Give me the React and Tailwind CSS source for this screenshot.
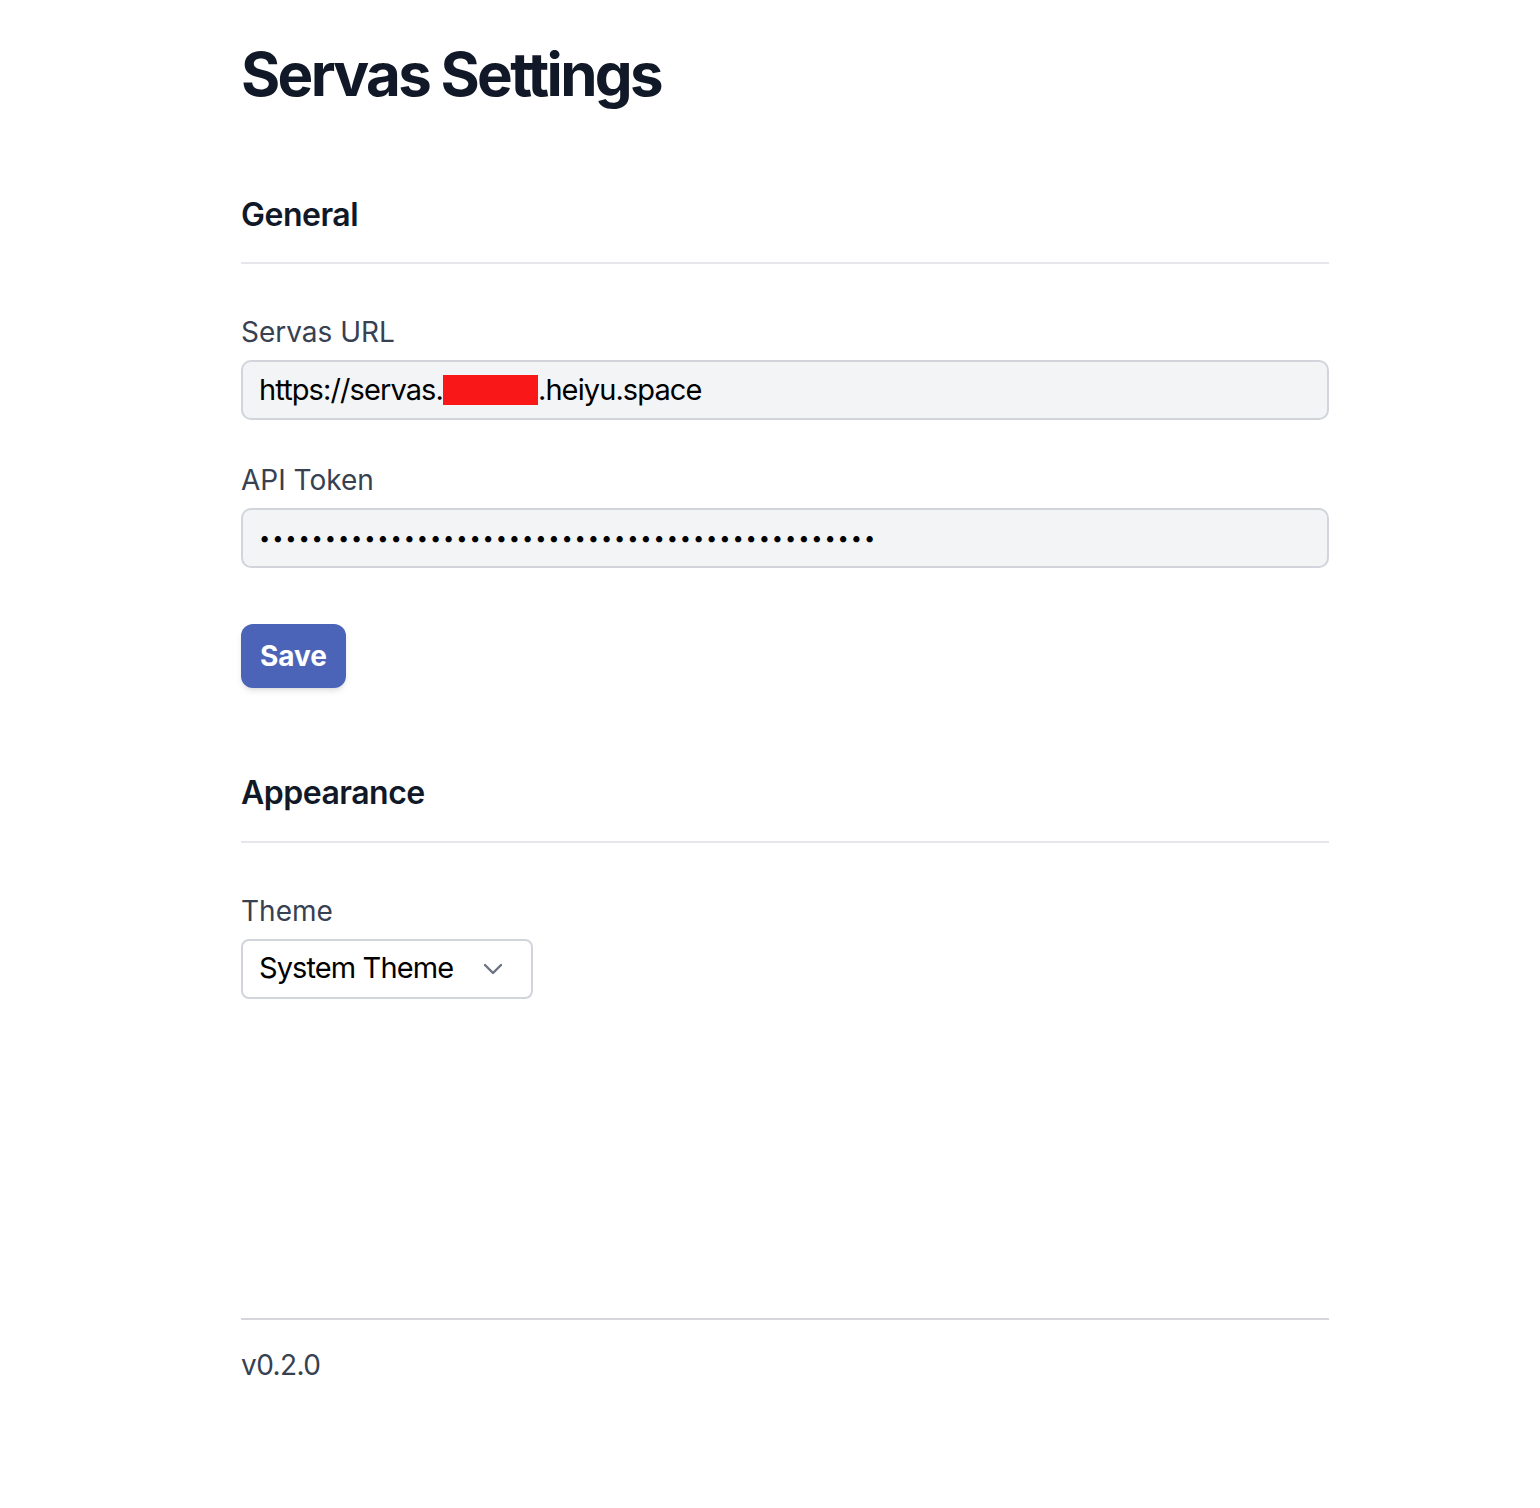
const Label = ({ children }) => (
  <div className="text-[28px] leading-[28px] text-[#374151]">{children}</div>
);

const App = () => {
  return (
    <div className="min-h-screen bg-white font-['Inter',sans-serif]">
      <div className="ml-[241px] w-[1088px] pt-[44px] pb-[128px] flex flex-col">
        <h1 className="text-[60px] leading-[60px] font-bold tracking-[-2.7px] text-[#111827]">
          Servas Settings
        </h1>

        {/* General */}
        <div className="mt-[94px] pb-[30px] border-b-2 border-[#e5e7eb]">
          <h2 className="text-[32px] leading-[34px] font-semibold tracking-[-0.5px] text-[#111827]">General</h2>
        </div>

        <div className="mt-[54px]">
          <Label>Servas URL</Label>
          <div className="mt-[14px] h-[60px] w-full flex items-center whitespace-nowrap px-[16px] bg-[#f3f4f6] border-2 border-[#d1d5db] rounded-[10px] text-[29px] tracking-[-0.9px] text-black">
            <span>https://servas.</span>
            <span className="inline-block w-[95px] h-[30px] bg-[#f91717]"></span>
            <span>.heiyu.space</span>
          </div>
        </div>

        <div className="mt-[46px]">
          <Label>API Token</Label>
          <div className="mt-[14px] h-[60px] w-full flex items-center whitespace-nowrap px-[16px] bg-[#f3f4f6] border-2 border-[#d1d5db] rounded-[10px] text-[20px] text-black tracking-[1.9px]">
            {"•".repeat(47)}
          </div>
        </div>

        <div className="mt-[56px]">
          <button className="h-[64px] w-[105px] flex items-center justify-center rounded-[12px] bg-[#4c64b8] text-white text-[28px] font-bold shadow-md">
            Save
          </button>
        </div>

        {/* Appearance */}
        <div className="mt-[88px] pb-[31px] border-b-2 border-[#e5e7eb]">
          <h2 className="text-[32px] leading-[34px] font-semibold tracking-[-0.5px] text-[#111827]">Appearance</h2>
        </div>

        <div className="mt-[54px]">
          <Label>Theme</Label>
          <div className="mt-[14px] h-[60px] w-[292px] flex items-center justify-between whitespace-nowrap pl-[16px] pr-[28px] bg-white border-2 border-[#d1d5db] rounded-[8px] text-[29px] tracking-[-0.9px] text-black">
            <span className="-mt-[2px]">System Theme</span>
            <svg width="20" height="12" viewBox="0 0 20 12" fill="none">
              <path d="M2 2l8 8 8-8" stroke="#6b7280" strokeWidth="2.4" strokeLinecap="round" strokeLinejoin="round" />
            </svg>
          </div>
        </div>

        {/* Footer */}
        <div className="mt-[319px] border-t-2 border-[#d4d6db] pt-[31px]">
          <div className="text-[28px] leading-[28px] tracking-[-0.6px] text-[#374151]">v0.2.0</div>
        </div>
      </div>
    </div>
  );
};

export default App;
